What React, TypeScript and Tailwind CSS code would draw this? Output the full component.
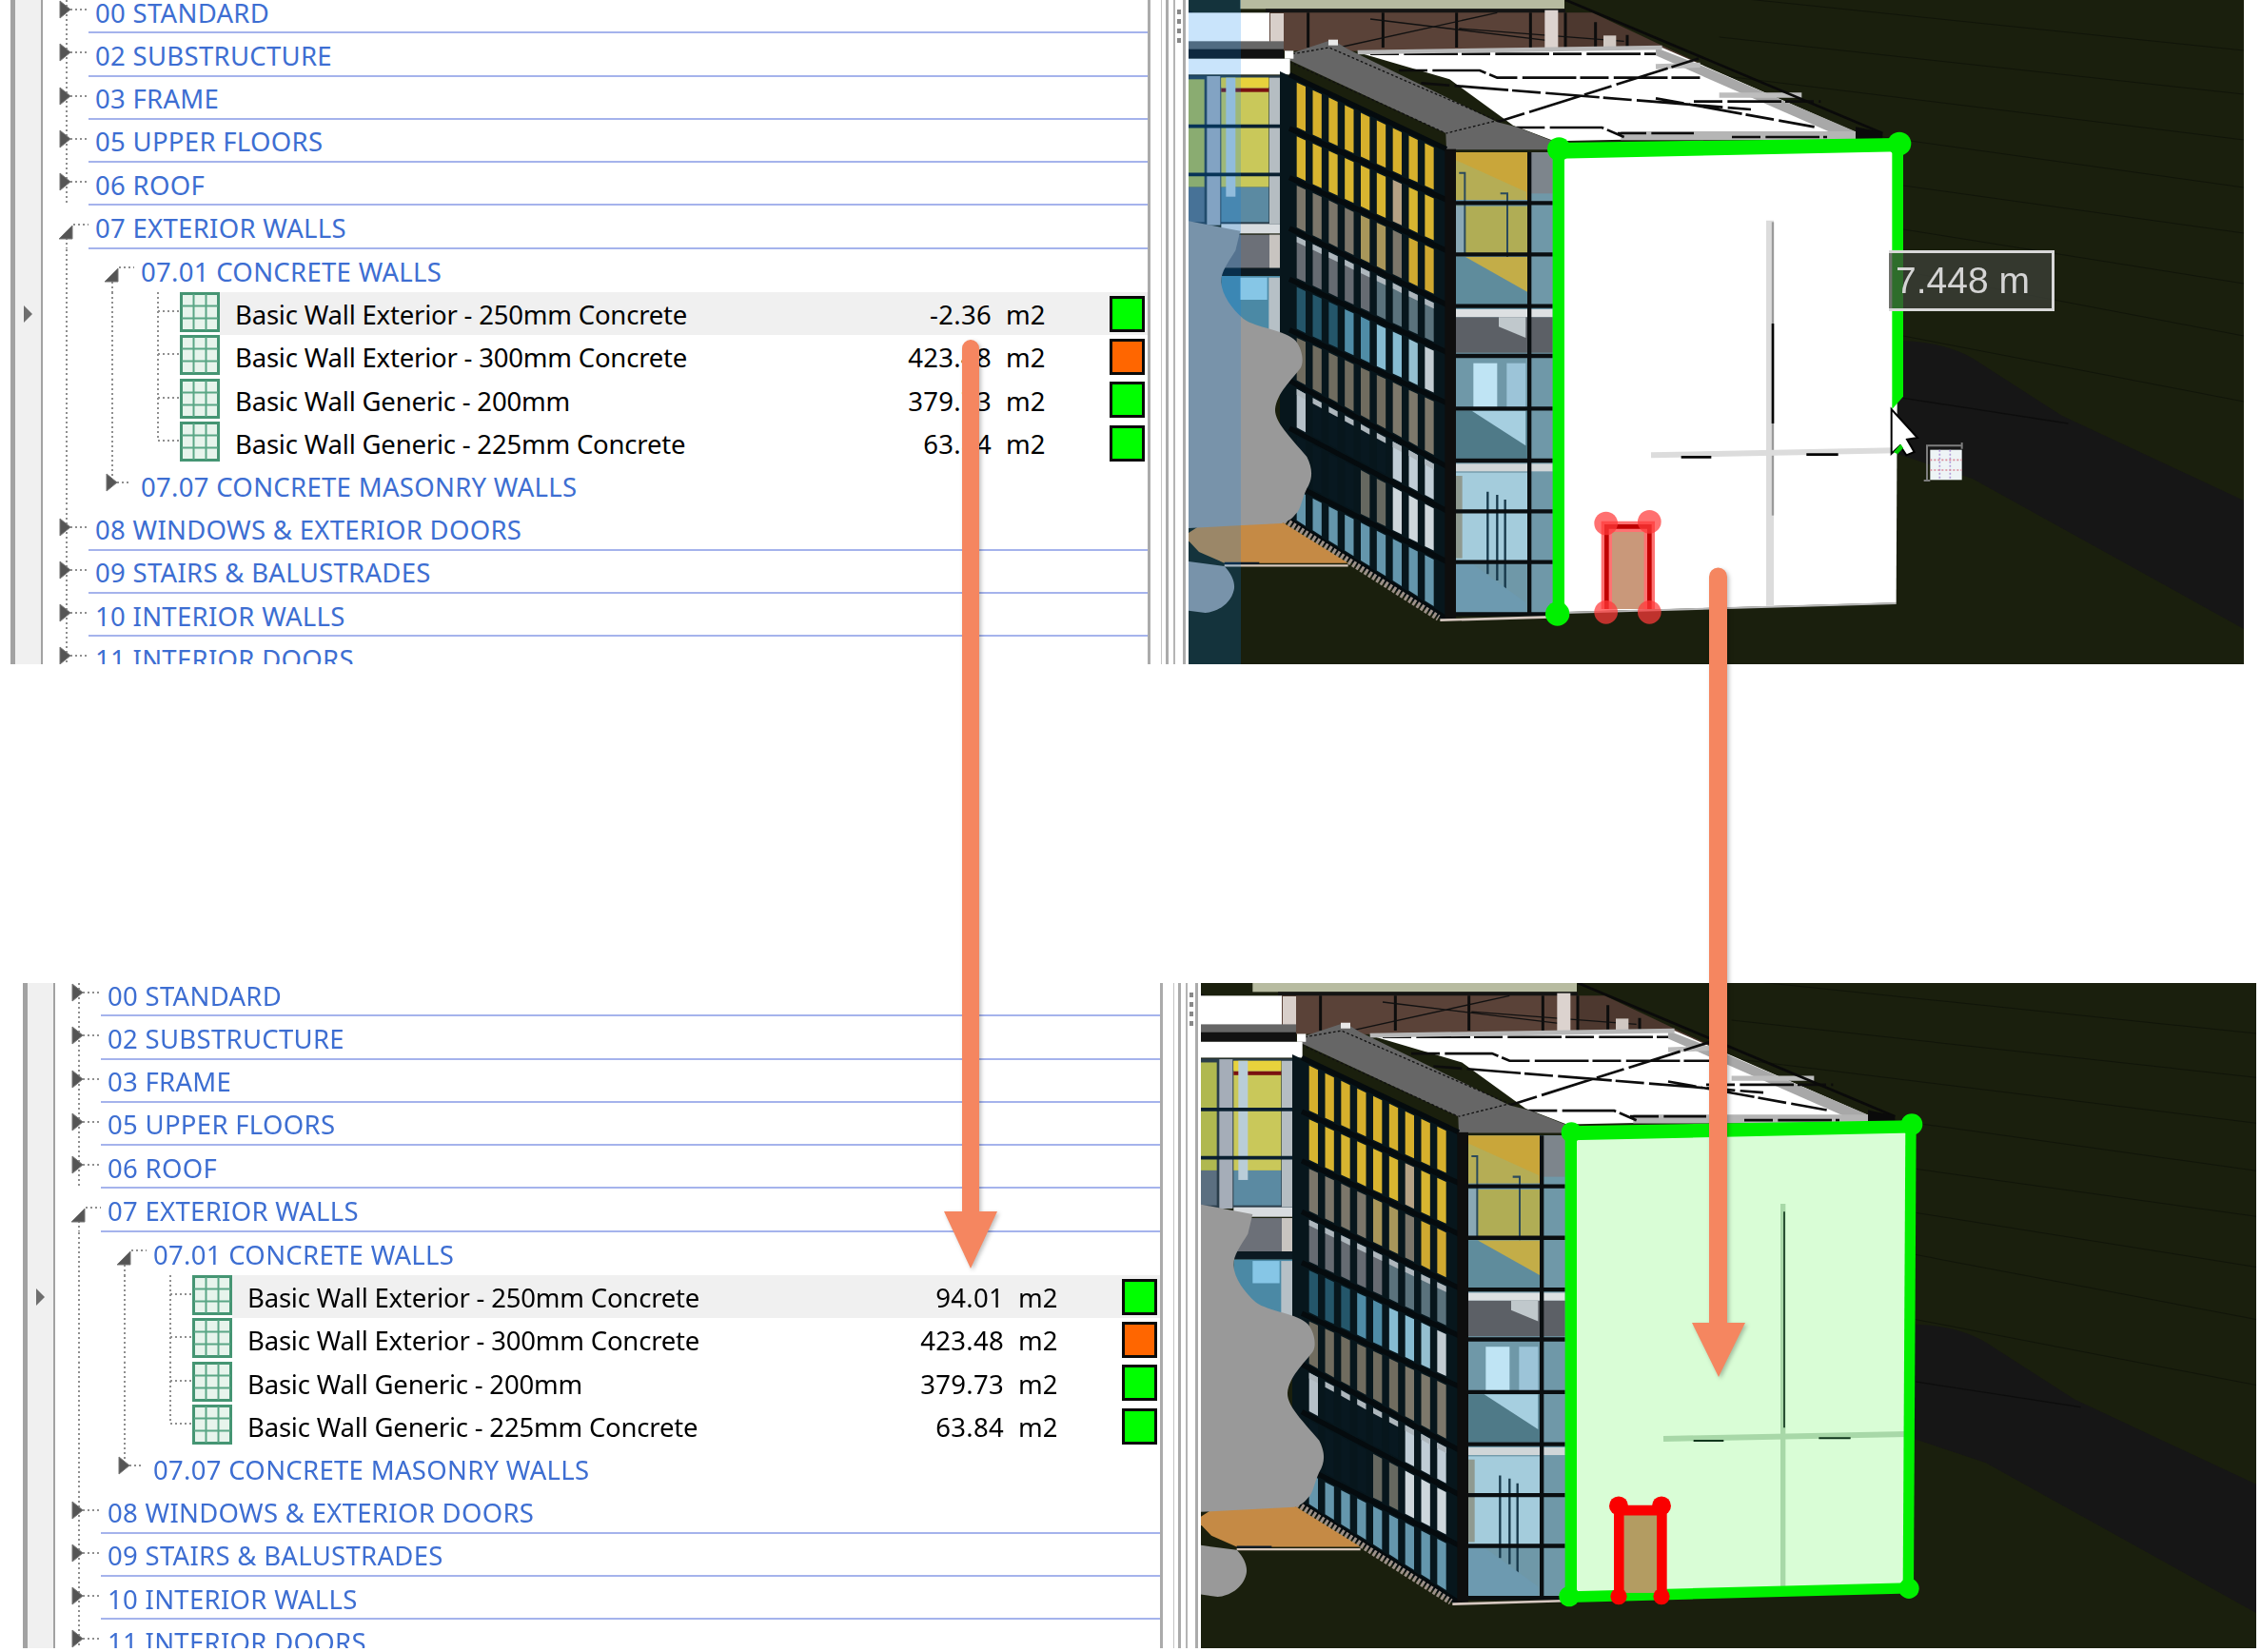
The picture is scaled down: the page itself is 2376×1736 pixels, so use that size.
import React from "react";

const H = 45.3;

function Dots({ x1, y1, x2, y2 }: { x1: number; y1: number; x2: number; y2: number }) {
  return <line x1={x1} y1={y1} x2={x2} y2={y2} stroke="#8f8f8f" strokeWidth={2} strokeDasharray="2 3" />;
}

function TriRight({ x, y }: { x: number; y: number }) {
  return <polygon points={`${x},${y - 9} ${x + 11},${y} ${x},${y + 9}`} fill="#555" stroke="#777" strokeWidth={1} />;
}

function TriDown({ x, y }: { x: number; y: number }) {
  return <polygon points={`${x + 14},${y} ${x + 14},${y + 14} ${x},${y + 14}`} fill="#555" stroke="#777" strokeWidth={1} />;
}

function Rail({ width, children }: { width: number; children: React.ReactNode }) {
  return (
    <svg width={width} height={H} className="shrink-0 block">
      {children}
    </svg>
  );
}

function Group({ label }: { label: string }) {
  return (
    <div className="flex h-[45.3px]">
      <Rail width={48}>
        <Dots x1={25} y1={0} x2={25} y2={H} />
        <Dots x1={29} y1={20} x2={48} y2={20} />
        <TriRight x={18} y={20} />
      </Rail>
      <div className="flex-1 min-w-0 flex items-center pl-[7px] pt-[3px] border-b-[2px] border-[#a5b3ec] text-[#3d6ed2] whitespace-nowrap">
        {label}
      </div>
    </div>
  );
}

function Expanded({ label }: { label: string }) {
  return (
    <div className="flex h-[45.3px]">
      <Rail width={48}>
        <Dots x1={25} y1={34} x2={25} y2={H} />
        <Dots x1={32} y1={20} x2={48} y2={20} />
        <TriDown x={17} y={21} />
      </Rail>
      <div className="flex-1 min-w-0 flex items-center pl-[7px] pt-[3px] border-b-[2px] border-[#a5b3ec] text-[#3d6ed2] whitespace-nowrap">
        {label}
      </div>
    </div>
  );
}

function SubGroup({ label, open }: { label: string; open?: boolean }) {
  return (
    <div className="flex h-[45.3px]">
      <Rail width={103}>
        <Dots x1={25} y1={0} x2={25} y2={H} />
        {open ? (
          <>
            <Dots x1={73} y1={34} x2={73} y2={H} />
            <Dots x1={80} y1={19} x2={96} y2={19} />
            <TriDown x={65} y={20} />
          </>
        ) : (
          <>
            <Dots x1={73} y1={0} x2={73} y2={12} />
            <Dots x1={78} y1={19} x2={93} y2={19} />
            <TriRight x={67} y={19} />
          </>
        )}
      </Rail>
      <div className="flex-1 min-w-0 flex items-center pt-[2px] text-[#3d6ed2] whitespace-nowrap">{label}</div>
    </div>
  );
}

function WallIcon() {
  return (
    <svg width={42} height={42} viewBox="0 0 42 42" className="shrink-0 block">
      <rect x={1.5} y={1.5} width={39} height={39} fill="#e7f4ec" stroke="#459573" strokeWidth={3} />
      <path d="M14.5 2V40M27.5 2V40M2 14.5H40M2 27.5H40" stroke="#5aa685" strokeWidth={2} />
    </svg>
  );
}

function Item({
  name,
  value,
  color,
  active,
  last,
}: {
  name: string;
  value: string;
  color: string;
  active?: boolean;
  last?: boolean;
}) {
  return (
    <div className="flex h-[45.3px]">
      <Rail width={144}>
        <Dots x1={25} y1={0} x2={25} y2={H} />
        <Dots x1={73} y1={0} x2={73} y2={H} />
        <Dots x1={121} y1={0} x2={121} y2={last ? 20 : H} />
        <Dots x1={121} y1={20} x2={143} y2={20} />
      </Rail>
      <WallIcon />
      <div className={`flex-1 min-w-0 flex items-center pl-[16px] text-black whitespace-nowrap ${active ? "bg-[#f0f0f0]" : ""}`}>
        <div className="flex-1 min-w-0 pt-[2px] tracking-[-0.2px]">{name}</div>
        <div className="w-[130px] pt-[2px] text-right">{value}</div>
        <div className="ml-[15px] w-[109px] pt-[2px] tracking-normal">m2</div>
        <div className="w-[37px] h-[38px] border-[3px] border-[#0a0a0a] mr-[3px]" style={{ backgroundColor: color }} />
      </div>
    </div>
  );
}

const LEFT = [235, 405, 560, 720, 880, 1040, 1200, 1350, 1520, 1640];
const RIGHT = [470, 630, 790, 960, 1110, 1270, 1470, 1610, 1770, 1950];

function panelColor(r: number, c: number): string {
  if (r === 0) return "#d6b02c";
  if (r === 1) return c === 6 ? "#b5a285" : "#d8b530";
  if (r === 2) return c === 7 || c === 8 ? "#cfa930" : c === 4 || c === 5 ? "#a8965a" : "#7b766a";
  if (r === 3) return c < 5 ? "#666b72" : "#5a727c";
  if (r === 4) {
    if (c < 3) return "#24566a";
    if (c < 5) return "#4f8ca6";
    if (c < 7) return "#86bcd2";
    return c === 7 ? "#94bfd0" : "#c2ccd2";
  }
  if (r === 5) return c > 5 ? "#7d786b" : "#706c5f";
  if (r === 6) return c === 0 ? "#b6c1c9" : c > 5 ? "#c0cdd6" : "#081820";
  if (r === 7) return c > 5 ? "#ced7dc" : c > 3 ? "#666860" : "#081820";
  return "#6496ac";
}

function Facade() {
  const yAt = (i: number, x: number) => LEFT[i] + ((RIGHT[i] - LEFT[i]) * (x - 345)) / 495;
  const cells: React.ReactNode[] = [];
  for (let r = 0; r < 9; r++) {
    for (let c = 0; c < 9; c++) {
      const x1 = 368 + c * 50.5;
      const x2 = x1 + 28;
      const t = 14;
      const pts = `${x1},${yAt(r, x1) + t} ${x2},${yAt(r, x2) + t} ${x2},${yAt(r + 1, x2) - t} ${x1},${yAt(r + 1, x1) - t}`;
      cells.push(<polygon key={`${r}-${c}`} points={pts} fill={panelColor(r, c)} />);
      if (r === 3 || r === 6) {
        const b = `${x1},${yAt(r, x1) + t} ${x2},${yAt(r, x2) + t} ${x2},${yAt(r, x2) + t + 18} ${x1},${yAt(r, x1) + t + 18}`;
        cells.push(<polygon key={`b${r}-${c}`} points={b} fill="#aeb7bd" />);
      }
    }
  }
  return (
    <g>
      <polygon points="315,225 840,470 840,1955 820,1950 330,1640 315,1620" fill="#07161c" />
      {cells}
      {LEFT.map((l, i) => (
        <line key={i} x1={345} y1={l} x2={840} y2={RIGHT[i]} stroke="#050b0e" strokeWidth={16} />
      ))}
      <rect x={835} y={470} width={35} height={1480} fill="#0e0e0e" />
      <line x1={330} y1={1640} x2={815} y2={1948} stroke="#9c9088" strokeWidth={20} strokeDasharray="9 6" />
    </g>
  );
}

function RightFace() {
  return (
    <g>
      <rect x={870} y={480} width={310} height={1460} fill="#6f98a8" />
      <rect x={870} y={480} width={225} height={150} fill="#c9a63a" />
      <polygon points="870,505 1092,605 1092,630 870,630" fill="#b5ad55" />
      <rect x={870} y={650} width={225} height={150} fill="#b0ad55" />
      <rect x={870} y={650} width={30} height={150} fill="#8aa8b5" />
      <path d="M880 545H898V800M1010 610H1032V900" fill="none" stroke="#2b4a5c" strokeWidth={6} />
      <rect x={870} y={810} width={225} height={150} fill="#5f8c9c" />
      <polygon points="900,810 1095,920 1095,810" fill="#c3ad48" />
      <rect x={870} y={975} width={305} height={25} fill="#dde0e2" />
      <rect x={870} y={1000} width={305} height={112} fill="#5c6066" />
      <polygon points="1005,1000 1090,1000 1090,1065 1005,1030" fill="#c0c8cc" />
      <rect x={925} y={1145} width={75} height={140} fill="#bfe4f4" />
      <rect x={1030} y={1145} width={60} height={140} fill="#9cc4d8" />
      <rect x={870} y={1295} width={225} height={150} fill="#4f7a88" />
      <polygon points="920,1295 1090,1295 1090,1405" fill="#a6cfe0" />
      <rect x={870} y={1462} width={305} height={24} fill="#d0d6d8" />
      <rect x={870} y={1490} width={225} height={280} fill="#a4ccdc" />
      <rect x={870} y={1500} width={20} height={260} fill="#8f9a90" />
      <path d="M970 1550V1810M1000 1560V1830M1025 1575V1860" fill="none" stroke="#17384a" strokeWidth={7} />
      <polygon points="870,1780 925,1780 1090,1900 1090,1930 870,1930" fill="#6d9ab0" />
      <rect x={1105} y={480} width={70} height={130} fill="#7d858c" />
      <path d="M870 640H1175M870 802H1175M870 965H1175M870 1122H1175M870 1288H1175M870 1452H1175M870 1612H1175M870 1772H1175M870 1936H1175" stroke="#0a0e10" strokeWidth={13} />
      <rect x={1095} y={480} width={13} height={1460} fill="#0a0e10" />
    </g>
  );
}

function LeftBlock() {
  return (
    <g>
      <rect x={27} y={40} width={255} height={100} fill="#fff" />
      <rect x={27} y={130} width={300} height={28} fill="#666" />
      <rect x={27} y={155} width={300} height={30} fill="#111" />
      <rect x={27} y={185} width={320} height={50} fill="#fff" />
      <rect x={27} y={238} width={290} height={470} fill="#2a3d4a" />
      <rect x={27} y={250} width={50} height={340} fill="#b0b850" />
      <rect x={27} y={590} width={50} height={110} fill="#5b6f80" />
      <rect x={85} y={240} width={42} height={470} fill="#a5adb8" />
      <rect x={130} y={245} width={150} height={345} fill="#c9c85a" />
      <rect x={130} y={245} width={150} height={30} fill="#e8d23c" />
      <rect x={130} y={278} width={150} height={12} fill="#7a1010" />
      <rect x={130} y={590} width={150} height={110} fill="#5b8aa2" />
      <rect x={145} y={245} width={30} height={375} fill="#b9cdd8" />
      <rect x={282} y={245} width={33} height={460} fill="#b5bdc2" />
      <path d="M27 398H315M27 550H315" stroke="#0a2030" strokeWidth={11} />
      <rect x={130} y={706} width={185} height={30} fill="#d8dcdf" />
      <rect x={130} y={740} width={185} height={105} fill="#6c7078" />
      <rect x={282} y={740} width={33} height={105} fill="#c8c4c0" />
      <rect x={130} y={845} width={185} height={24} fill="#0c1a22" />
      <rect x={130} y={870} width={185} height={180} fill="#4b89a5" />
      <rect x={190} y={875} width={85} height={70} fill="#86c6e6" />
      <rect x={280} y={875} width={35} height={180} fill="#b6c0c6" />
    </g>
  );
}

function Roof() {
  return (
    <g>
      <rect x={190} y={0} width={1022} height={28} fill="#b7bba0" />
      <rect x={270} y={28} width={945} height={12} fill="#141414" />
      <polygon points="280,40 1212,40 1650,210 1500,165 280,160" fill="#5a4238" />
      <polygon points="1212,40 1300,40 1640,200 1500,160 1212,150" fill="#4d382f" />
      <path d="M404 40V150M640 40V150M872 40V150M1105 40V150M1215 40V150M1310 70V150M1410 110V150" stroke="#0d0d0d" strokeWidth={9} />
      <path d="M500 150L1000 40M600 60L1180 130M880 90L1400 130" stroke="#111" strokeWidth={4} />
      <rect x={285} y={42} width={42} height={110} fill="#d8cfca" />
      <rect x={1150} y={32} width={42} height={118} fill="#dcd3cf" />
      <rect x={1335} y={112} width={40} height={36} fill="#d0c8c2" />
      <polygon points="560,165 1520,150 2150,425 1180,445 1050,395 850,250" fill="#fff" />
      <polygon points="1500,150 1640,205 2130,415 2080,430 1500,175" fill="#a8a8a8" />
      <path d="M1390 428H2140" stroke="#b5b5b5" strokeWidth={28} />
      <path d="M1700 300H1960M1500 210L1640 205" stroke="#bdbdbd" strokeWidth={16} />
      <path d="M600 170H1500M690 222H945L1000 245H1650M760 262L1800 345M1060 402H1330L1400 432M1000 385L1650 180M1620 320H2020M1500 310L2000 400M1380 420H1620M1740 432H2040" fill="none" stroke="#0c0c0c" strokeWidth={8} strokeDasharray="90 16 170 12" />
      <path d="M560 165L1520 150" stroke="#b8b8b8" strokeWidth={14} />
      <polygon points="345,190 360,165 480,125 530,155 1000,385 1060,400 1175,445 1175,472 840,472 838,420" fill="#666" />
      <path d="M345 195L838 420M355 170L470 150L1000 380L840 420" fill="none" stroke="#111" strokeWidth={4} strokeDasharray="8 7" />
      <rect x={330} y={160} width={28} height={25} fill="#fff" />
      <rect x={468} y={125} width={30} height={18} fill="#e8e8e8" />
      <path d="M27 35L270 150" stroke="#111" strokeWidth={5} strokeDasharray="14 8" />
      <path d="M1216 0L2215 420" stroke="#0a0a0a" strokeWidth={8} />
      <polygon points="2130,400 2215,418 2215,445 2130,445" fill="#0a0a0a" />
    </g>
  );
}

function Ground() {
  const lines: [number, number][] = [
    [48, 159],
    [180, 297],
    [309, 441],
    [441, 591],
    [585, 735],
    [723, 894],
    [855, 1059],
    [1059, 1266],
  ];
  return (
    <g>
      <rect x={27} y={0} width={3327} height={2094} fill="#1a1f0d" />
      {lines.map(([a, b], i) => (
        <line key={i} x1={1700} y1={a - ((b - a) * 580) / 1074} x2={3354} y2={b} stroke="#11150a" strokeWidth={3} />
      ))}
      <path d="M2260 1075C2350 1075 2430 1090 2500 1130L2780 1310L3354 1578V1983L2500 1510L2260 1430Z" fill="#161616" />
      <line x1={2280} y1={1255} x2={2800} y2={1335} stroke="#0d0d0d" strokeWidth={4} />
    </g>
  );
}

function Shrub({ fill }: { fill: string }) {
  return (
    <g fill={fill}>
      <path d="M27 697L190 728L175 790C150 830 128 860 130 890C132 930 165 975 200 1005C240 1035 335 1040 365 1075C385 1100 392 1140 380 1160C350 1200 305 1240 300 1290C298 1330 345 1375 400 1440C420 1480 418 1510 400 1540C385 1570 380 1610 365 1620C350 1640 335 1645 320 1650L27 1665Z" />
      <path d="M27 1770L140 1785C165 1810 175 1840 170 1860C160 1905 115 1930 80 1932L27 1925Z" />
    </g>
  );
}

function Floor() {
  return (
    <g>
      <polygon points="27,1680 65,1655 320,1645 530,1775 140,1775 60,1740 27,1705" fill="#c58a45" />
      <path d="M140 1783H530" stroke="#d8c8bc" strokeWidth={7} />
      <path d="M140 1775H250" stroke="#0a1a2a" strokeWidth={6} />
      <path d="M820 1955L1170 1945" stroke="#d6c8c0" strokeWidth={8} />
    </g>
  );
}

function WallBefore() {
  const g = "#00f000";
  return (
    <g>
      <polygon points="1190,490 2265,470 2258,1900 1190,1930" fill="#fff" />
      <path d="M1212 1932L2258 1902" stroke="#b8b8b8" strokeWidth={6} />
      <path d="M1860 695V1910" stroke="#dcdcdc" strokeWidth={24} />
      <path d="M1869 700V1020" stroke="#9a9a9a" strokeWidth={7} />
      <path d="M1869 1020V1335" stroke="#000" strokeWidth={8} />
      <path d="M1869 1335V1625" stroke="#9a9a9a" strokeWidth={7} />
      <path d="M1485 1435L2255 1420" stroke="#dcdcdc" strokeWidth={18} />
      <path d="M1580 1441H1675M1975 1433H2075" stroke="#000" strokeWidth={8} />
      <path d="M1175 470H1212V1935H1175Z" fill={g} />
      <path d="M1190 450L2268 435L2268 478L1190 500Z" fill={g} />
      <path d="M2245 453H2280V1250L2245 1290Z" fill={g} />
      <circle cx={1195} cy={470} r={37} fill={g} />
      <circle cx={2268} cy={453} r={37} fill={g} />
      <circle cx={1190} cy={1935} r={38} fill={g} />
      <rect x={1360} y={1670} width={105} height={250} fill="#c9987a" />
      <path d="M1345 1920V1660H1480V1920" fill="none" stroke="#ff7272" strokeWidth={34} />
      <path d="M1345 1920V1660H1480V1920" fill="none" stroke="#c00000" strokeWidth={14} />
      <g fill="#ff3a3a" opacity={0.72}>
        <circle cx={1343} cy={1650} r={37} />
        <circle cx={1480} cy={1645} r={37} />
        <circle cx={1343} cy={1930} r={37} />
        <circle cx={1480} cy={1930} r={37} />
      </g>
    </g>
  );
}

function WallAfter() {
  const g = "#00f000";
  return (
    <g>
      <polygon points="1190,480 2268,460 2259,1906 1190,1935" fill="#d9fdd6" />
      <path d="M1862 695V1905" stroke="#a8d8a8" strokeWidth={16} />
      <path d="M1866 720V1400" stroke="#10361c" strokeWidth={5} />
      <path d="M1485 1435L2255 1420" stroke="#a8d8a8" strokeWidth={18} />
      <path d="M1580 1441H1675M1975 1433H2075" stroke="#10361c" strokeWidth={6} />
      <path d="M1175 470H1212V1935H1175Z" fill={g} />
      <path d="M1190 450L2268 432L2268 472L1190 495Z" fill={g} />
      <path d="M2248 450H2282L2274 1906H2240Z" fill={g} />
      <path d="M1190 1915L2259 1888V1922L1190 1950Z" fill={g} />
      <circle cx={1195} cy={470} r={32} fill={g} />
      <circle cx={2268} cy={445} r={34} fill={g} />
      <circle cx={1188} cy={1931} r={32} fill={g} />
      <circle cx={2259} cy={1906} r={32} fill={g} />
      <rect x={1360} y={1670} width={105} height={250} fill="#b39c62" />
      <path d="M1345 1930V1660H1480V1930" fill="none" stroke="#fa0000" strokeWidth={32} />
      <g fill="#fa0000">
        <circle cx={1344} cy={1646} r={30} />
        <circle cx={1479} cy={1646} r={30} />
        <circle cx={1344} cy={1931} r={26} />
        <circle cx={1479} cy={1931} r={26} />
      </g>
    </g>
  );
}

function Cursor() {
  return (
    <g>
      <polygon points="2243,1290 2243,1430 2270,1405 2290,1435 2315,1425 2292,1385 2325,1380" fill="#fff" stroke="#000" strokeWidth={6} />
      <polygon points="2250,1425 2272,1400 2280,1412 2262,1432" fill="#00d000" />
      <path d="M2355 1515V1405H2465M2345 1515H2365M2465 1395V1415" fill="none" stroke="#7d7d7d" strokeWidth={6} />
      <rect x={2365} y={1418} width={100} height={95} fill="#eef4f6" />
      <path d="M2395 1418V1513M2428 1418V1513" stroke="#b29ad8" strokeWidth={5} strokeDasharray="6 6" />
      <path d="M2365 1450H2465M2365 1482H2465" stroke="#d88a9a" strokeWidth={5} strokeDasharray="6 6" />
    </g>
  );
}

function Viewport({ after }: { after?: boolean }) {
  return (
    <div className="relative flex-1 min-w-0 bg-[#1a1f0d]">
      <svg viewBox="27 0 3327 2094" preserveAspectRatio="none" className="block w-full h-full">
        <Ground />
        <Roof />
        <LeftBlock />
        <Facade />
        <RightFace />
        <Floor />
        <Shrub fill="#999999" />
        {after ? <WallAfter /> : <WallBefore />}
        {!after && <Cursor />}
        {!after && <rect x={27} y={0} width={165} height={2094} fill="#0080ee" opacity={0.21} />}
      </svg>
      {!after && (
        <div className="absolute left-[736px] top-[263px] w-[174px] h-[64px] flex items-center pl-[7px] bg-[#3e4139]/75 border-y-[3px] border-r-[3px] border-[#d8d8d8] text-[#d4d4d4] text-[39px] font-['Liberation_Sans',sans-serif] whitespace-nowrap">
          7.448 m
        </div>
      )}
    </div>
  );
}

function Splitter() {
  return (
    <div className="flex shrink-0 w-[43px] h-full">
      <div className="w-[3px] bg-[#ababab]" />
      <div className="w-[11px]" />
      <div className="w-[1px] bg-[#c4c4c4]" />
      <div className="w-[4px]" />
      <div className="w-[3px] bg-[#ababab]" />
      <div className="w-[5px]" />
      <div className="w-[2px] bg-[#b4b4b4]" />
      <div className="w-[8px] flex flex-col items-center gap-[5px] pt-[10px]">
        <div className="w-[4px] h-[5px] bg-[#888]" />
        <div className="w-[4px] h-[5px] bg-[#888]" />
        <div className="w-[4px] h-[5px] bg-[#888]" />
        <div className="w-[4px] h-[5px] bg-[#888]" />
      </div>
      <div className="w-[3px] bg-[#ababab]" />
      <div className="w-[3px]" />
    </div>
  );
}

function Panel({ after, className }: { after?: boolean; className: string }) {
  return (
    <div className={`flex blur-[0.5px] ${className}`}>
      <div className="shrink-0 w-[5px] bg-[#a2a2a2]" />
      <div className="shrink-0 w-[27px] bg-[#f0f0f0] pt-[321px] pl-[9px]">
        <svg width={10} height={18} className="block">
          <polygon points="0,0 9,9 0,18" fill="#6e6e6e" />
        </svg>
      </div>
      <div className="shrink-0 w-[2px] bg-[#a2a2a2]" />
      <div className="w-[1161px] shrink-0 overflow-hidden font-['Noto_Sans',sans-serif] text-[27.5px] tracking-[0.3px] bg-white">
        <div className="-mt-[10px]">
          <Group label="00 STANDARD" />
          <Group label="02 SUBSTRUCTURE" />
          <Group label="03 FRAME" />
          <Group label="05 UPPER FLOORS" />
          <Group label="06 ROOF" />
          <Expanded label="07 EXTERIOR WALLS" />
          <SubGroup open label="07.01 CONCRETE WALLS" />
          <Item active name="Basic Wall Exterior - 250mm Concrete" value={after ? "94.01" : "-2.36"} color="#00ff00" />
          <Item name="Basic Wall Exterior - 300mm Concrete" value="423.48" color="#ff6600" />
          <Item name="Basic Wall Generic - 200mm" value="379.73" color="#00ff00" />
          <Item last name="Basic Wall Generic - 225mm Concrete" value="63.84" color="#00ff00" />
          <SubGroup label="07.07 CONCRETE MASONRY WALLS" />
          <Group label="08 WINDOWS & EXTERIOR DOORS" />
          <Group label="09 STAIRS & BALUSTRADES" />
          <Group label="10 INTERIOR WALLS" />
          <Group label="11 INTERIOR DOORS" />
        </div>
      </div>
      <Splitter />
      <Viewport after={after} />
    </div>
  );
}

export default function App() {
  return (
    <div className="relative w-[2376px] h-[1736px] overflow-hidden bg-white">
      <Panel className="ml-[11px] w-[2347px] h-[698px]" />
      <Panel after className="ml-[24px] mt-[335px] w-[2347px] h-[699px]" />
      <svg
        width={2376}
        height={1736}
        className="absolute inset-0 pointer-events-none drop-shadow-[2px_2px_2px_rgba(0,0,0,0.25)]"
      >
        <g fill="#f58660">
          <path d="M1011 366A9 9 0 0 1 1029 366V1273H1048L1020 1333L992 1273H1011Z" />
          <path d="M1796 606A9.5 9.5 0 0 1 1815 606V1390H1834L1806 1447L1778 1390H1796Z" />
        </g>
      </svg>
    </div>
  );
}
